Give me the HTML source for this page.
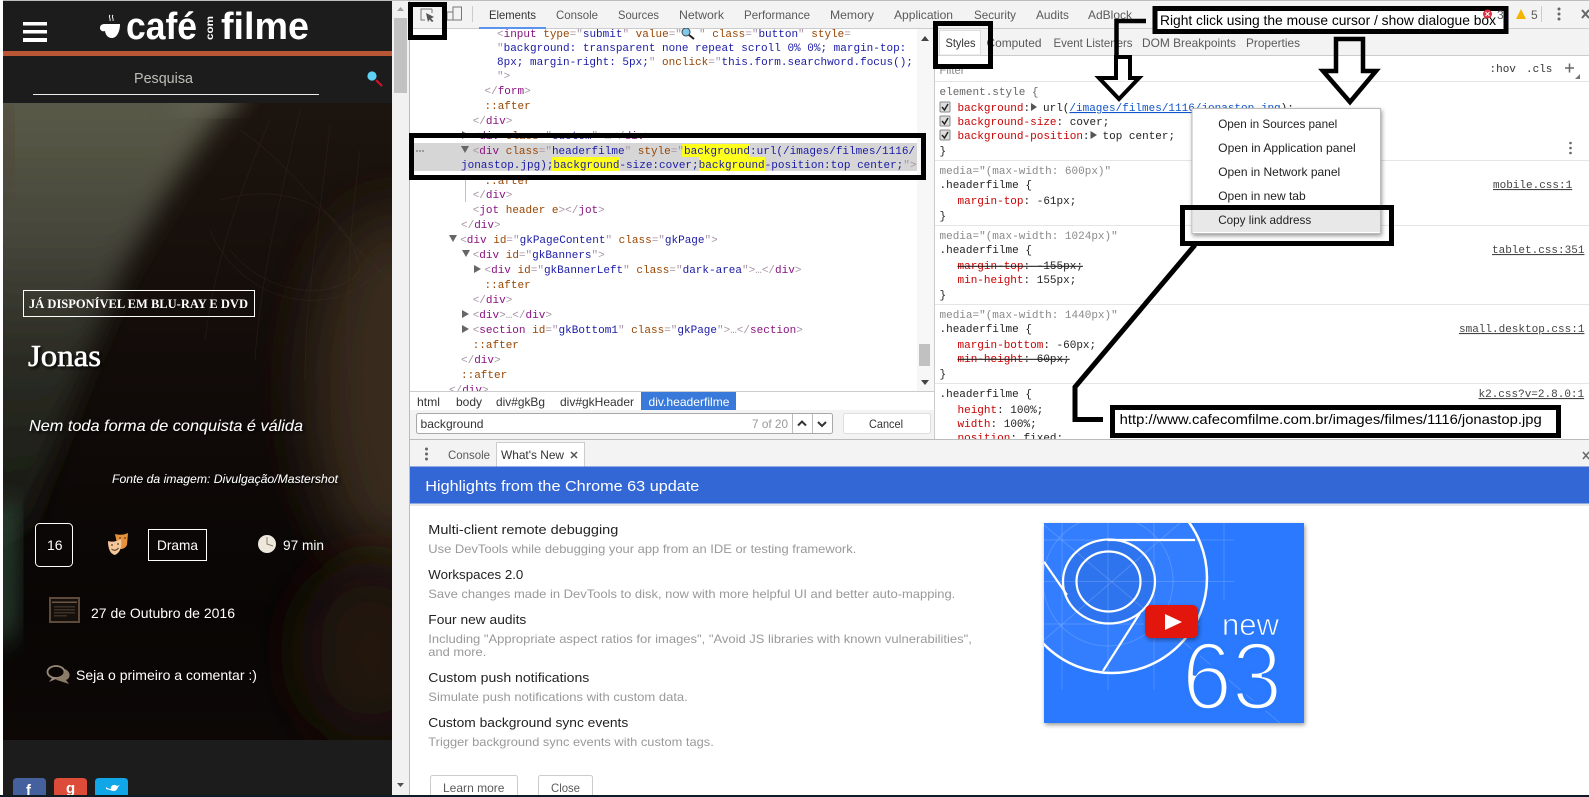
<!DOCTYPE html>
<html><head><meta charset="utf-8"><title>DevTools</title>
<style>
html,body{margin:0;padding:0;background:#fff;width:1589px;height:797px;overflow:hidden}
svg{display:block}
text{white-space:pre}
.s{font:12px "Liberation Sans",sans-serif;fill:#333}
.g{fill:#5a5a5a}
.m{font:11px "Liberation Mono",monospace;fill:#222}
.b{fill:#a894a6}.n{fill:#881280}.a{fill:#994500}.v{fill:#1a1aa6}
.r{fill:#c80000}.q{fill:#8a8a8a}
.h{font:13px "Liberation Sans",sans-serif;fill:#222}
.d{font:12px "Liberation Sans",sans-serif;fill:#999}
.w{font-family:"Liberation Sans",sans-serif;fill:#fff}
.ts{filter:url(#sh)}
</style></head><body>
<svg width="1589" height="797" viewBox="0 0 1589 797" xmlns="http://www.w3.org/2000/svg">
<defs>
<filter id="b1" x="-30%" y="-30%" width="160%" height="160%"><feGaussianBlur stdDeviation="13"/></filter>
<filter id="b2" x="-50%" y="-50%" width="200%" height="200%"><feGaussianBlur stdDeviation="30"/></filter>
<filter id="sh" x="-10%" y="-30%" width="125%" height="180%"><feDropShadow dx="2" dy="2" stdDeviation="1.5" flood-color="#000" flood-opacity=".9"/></filter>
<filter id="ms" x="-10%" y="-10%" width="120%" height="125%"><feDropShadow dx="1" dy="2" stdDeviation="2" flood-color="#000" flood-opacity=".4"/></filter>
<linearGradient id="base" x1="0" y1="0" x2="0" y2="1"><stop offset="0" stop-color="#1c140e"/><stop offset=".5" stop-color="#100a08"/><stop offset=".8" stop-color="#080504"/><stop offset="1" stop-color="#0d0806"/></linearGradient>
<linearGradient id="olive" gradientUnits="userSpaceOnUse" x1="0" y1="103" x2="0" y2="560"><stop offset="0" stop-color="#5a5a48"/><stop offset=".3" stop-color="#45453a"/><stop offset=".55" stop-color="#2b2c24"/><stop offset="1" stop-color="#14160f"/></linearGradient>
<clipPath id="hero"><rect x="3" y="103" width="389" height="637"/></clipPath>
<clipPath id="vid"><rect x="1044" y="523" width="260" height="200"/></clipPath>
<clipPath id="els"><rect x="409" y="28" width="508" height="363"/></clipPath>
<clipPath id="sty"><rect x="935" y="55" width="654" height="384"/></clipPath>
</defs>

<!-- left site -->
<rect x="3" y="1" width="389" height="794" fill="#1c1c1c"/>
<g clip-path="url(#hero)">
<rect x="3" y="103" width="389" height="637" fill="url(#base)"/>
<ellipse cx="395" cy="390" rx="85" ry="180" fill="#38291e" filter="url(#b2)"/>
<ellipse cx="370" cy="650" rx="70" ry="90" fill="#21150f" filter="url(#b2)"/>
<path d="M-30 75H255C205 130 160 200 123 270C100 320 80 380 62 430L30 520L-30 560Z" fill="url(#olive)" filter="url(#b1)"/>
<ellipse cx="205" cy="104" rx="35" ry="9" fill="#68685a" filter="url(#b1)" opacity=".7"/>
<rect x="3" y="103" width="9" height="80" fill="#4c3d2c" filter="url(#b1)"/>
<path d="M-8 510L16 500L14 630L-8 650Z" fill="#2f4a37" filter="url(#b1)"/>
<g fill="none" stroke="#4d3d30" stroke-width=".8" opacity=".25">
<path d="M240 130C300 170 350 250 390 280"/><path d="M270 120C240 190 215 260 205 340"/><path d="M300 110C280 200 260 280 255 360"/>
<path d="M220 200C290 180 350 210 360 270C340 300 270 300 230 250"/><path d="M330 125C320 220 305 300 305 380"/>
<path d="M360 150C350 230 345 300 350 380"/><path d="M210 230C240 300 320 320 370 280"/>
</g>
</g>
<rect x="3" y="51" width="389" height="5" fill="#b95735"/>
<rect x="23" y="22" width="24" height="3.500" fill="#fff"/><rect x="23" y="30" width="24" height="3.500" fill="#fff"/><rect x="23" y="38" width="24" height="4" fill="#fff"/>
<path d="M105 24H120C120 33 116 38 112 38C108 38 105.500 35 105 31C102 32 100 30 100 28C100 25 102 24 105 24Z" fill="#fff"/>
<path d="M110 15C108 17 111 18 110 21M113 15C111 17 114 18 113 21" stroke="#fff" fill="none" stroke-width=".9"/>
<text x="126" y="39" textLength="71" lengthAdjust="spacingAndGlyphs" style="font:bold 38px 'Liberation Sans',sans-serif" fill="#fff">café</text>
<text x="221" y="39" textLength="88" lengthAdjust="spacingAndGlyphs" style="font:bold 38px 'Liberation Sans',sans-serif" fill="#fff">filme</text>
<text transform="translate(213,40) rotate(-90)" textLength="24" lengthAdjust="spacingAndGlyphs" style="font:bold 10px 'Liberation Sans',sans-serif" fill="#fff">com</text>
<text x="134" y="83" textLength="59" lengthAdjust="spacingAndGlyphs" style="font:15px 'Liberation Sans',sans-serif" fill="#bdbdb8">Pesquisa</text>
<rect x="33" y="94" width="286" height="1" fill="#eee"/>
<circle cx="372" cy="76" r="4.600" fill="#5fd3f5"/><path d="M376 80L382 86" stroke="#d8102a" stroke-width="2"/>

<rect x="23.500" y="290.500" width="231" height="26" fill="none" stroke="#fff"/>
<text x="29" y="308" textLength="219" lengthAdjust="spacingAndGlyphs" style="font:bold 13px 'Liberation Serif',serif" fill="#fff">JÁ DISPONÍVEL EM BLU-RAY E DVD</text>
<text class="ts" x="28" y="366" textLength="73" lengthAdjust="spacingAndGlyphs" style="font:31px 'Liberation Serif',serif;stroke:#fff;stroke-width:.5" fill="#fff">Jonas</text>
<text class="ts" x="29" y="431" textLength="274" lengthAdjust="spacingAndGlyphs" style="font:italic 16px 'Liberation Sans',sans-serif" fill="#fff">Nem toda forma de conquista é válida</text>
<text class="ts" x="112" y="483" textLength="226" lengthAdjust="spacingAndGlyphs" style="font:italic 12px 'Liberation Sans',sans-serif" fill="#fff">Fonte da imagem: Divulgação/Mastershot</text>

<rect x="35.500" y="523.500" width="37" height="43" rx="4" fill="none" stroke="#fff"/>
<text class="w" x="47" y="550" font-size="14">16</text>
<path d="M115 534Q122 536 128 533L127 545C125 549 121 550 118 548Z" fill="#e8913c"/>
<path d="M108 541Q114 543 121 539C122 546 121 552 115 555C110 554 108 548 108 541Z" fill="#f3c79a"/>
<path d="M111.500 549Q115 552 118.500 548" stroke="#5a3a20" fill="none"/>
<circle cx="112" cy="545" r=".9" fill="#5a3a20"/><circle cx="118" cy="544" r=".9" fill="#5a3a20"/>
<circle cx="120" cy="538" r=".9" fill="#5a3a20"/><circle cx="125" cy="538" r=".9" fill="#5a3a20"/>
<rect x="148.500" y="529.500" width="58" height="31" fill="none" stroke="#fff"/>
<text class="w" x="157" y="550" font-size="14" textLength="41" lengthAdjust="spacingAndGlyphs">Drama</text>
<circle cx="267" cy="544" r="9" fill="#eee8dc"/><path d="M267 537V544L273 546" stroke="#8a7a68" fill="none"/>
<text class="w" x="283" y="550" font-size="14" textLength="41" lengthAdjust="spacingAndGlyphs">97 min</text>
<rect x="50" y="598" width="29" height="24" fill="#15100c" stroke="#5d4a3a" stroke-width="2"/>
<rect x="52" y="601.500" width="25" height="1.500" fill="#6b5645"/>
<g fill="#3d3026"><rect x="54" y="606" width="21" height="1.500"/><rect x="54" y="609" width="21" height="1.500"/><rect x="54" y="612" width="21" height="1.500"/><rect x="54" y="615" width="13" height="1.500"/></g>
<text class="w" x="91" y="618" font-size="14" textLength="144" lengthAdjust="spacingAndGlyphs">27 de Outubro de 2016</text>
<ellipse cx="56" cy="672" rx="8.500" ry="6" fill="none" stroke="#9a8a78" stroke-width="1.800"/>
<path d="M52 678L49 682L57 678.500" fill="#9a8a78"/>
<path d="M65 669C71 672 71 678 66 680L69 684L60 681L55 679.500C60 679 65 675 65 669Z" fill="#8a7a68"/>
<text class="w" x="76" y="680" font-size="14" textLength="181" lengthAdjust="spacingAndGlyphs">Seja o primeiro a comentar :)</text>

<path d="M13 795V782Q13 778 17 778H42Q46 778 46 782V795Z" fill="#45619d"/>
<path d="M54 795V782Q54 778 58 778H83Q87 778 87 782V795Z" fill="#dd4b39"/>
<path d="M95 795V782Q95 778 99 778H124Q128 778 128 782V795Z" fill="#10a6e8"/>
<text class="w" x="26" y="795" font-size="15" font-weight="bold">f</text>
<text class="w" x="66" y="793" font-size="15" font-weight="bold">g</text>
<path d="M106 789L110 790C114 792 117 791 118 787L120 785L117 786C113 783 110 787 111 789C109 789 107 788 106 787Z" fill="#fff"/>

<!-- page scrollbar -->
<rect x="392" y="0" width="17" height="797" fill="#f1f1f1"/>
<rect x="394" y="18" width="13" height="75" fill="#c1c1c1"/>
<path d="M397 11L400.500 7L404 11Z" fill="#a0a0a0"/><path d="M397 783L400.500 787L404 783Z" fill="#505050"/>

<!-- devtools top bar -->
<rect x="409" y="0" width="1180" height="28" fill="#f3f3f3"/>
<rect x="409" y="28" width="1180" height="1" fill="#ccc"/>
<rect x="409" y="0" width="1" height="797" fill="#bbb"/>
<rect x="0" y="0" width="1589" height="1" fill="#bdbdbd"/>
<path d="M432 9H421V20H425M432 9V13" fill="none" stroke="#777"/>
<path d="M426 13L434 17L431 18.500L433.500 21L432 22L429.500 19.500L428 22Z" fill="#555"/>
<rect x="453" y="7" width="8.500" height="13" fill="none" stroke="#777"/><rect x="447" y="12" width="6" height="8" fill="none" stroke="#777"/>
<rect x="472" y="6" width="1" height="16" fill="#ccc"/>
<g class="s">
<text class="s" x="489" y="19" textLength="47" lengthAdjust="spacingAndGlyphs">Elements</text>
<text class="s g" x="556" y="19" textLength="42" lengthAdjust="spacingAndGlyphs">Console</text>
<text class="s g" x="618" y="19" textLength="41" lengthAdjust="spacingAndGlyphs">Sources</text>
<text class="s g" x="679" y="19" textLength="45" lengthAdjust="spacingAndGlyphs">Network</text>
<text class="s g" x="744" y="19" textLength="66" lengthAdjust="spacingAndGlyphs">Performance</text>
<text class="s g" x="830" y="19" textLength="44" lengthAdjust="spacingAndGlyphs">Memory</text>
<text class="s g" x="894" y="19" textLength="59" lengthAdjust="spacingAndGlyphs">Application</text>
<text class="s g" x="974" y="19" textLength="42" lengthAdjust="spacingAndGlyphs">Security</text>
<text class="s g" x="1036" y="19" textLength="33" lengthAdjust="spacingAndGlyphs">Audits</text>
<text class="s g" x="1088" y="19" textLength="44" lengthAdjust="spacingAndGlyphs">AdBlock</text>
</g>
<rect x="479" y="27" width="67" height="2" fill="#5a94ee"/>
<path d="M1516 19L1521 9L1526 19Z" fill="#f4b400"/>
<text class="s g" x="1531" y="19">5</text>
<rect x="1541" y="6" width="1" height="16" fill="#ccc"/>
<circle cx="1559" cy="9" r="1.500" fill="#666"/><circle cx="1559" cy="14" r="1.500" fill="#666"/><circle cx="1559" cy="19" r="1.500" fill="#666"/>
<path d="M1582 10L1589 18M1589 10L1582 18" stroke="#666" stroke-width="2"/>

<!-- elements panel -->
<rect x="410" y="29" width="507" height="362" fill="#fff"/>
<rect x="917" y="29" width="17" height="362" fill="#f7f7f7"/>
<rect x="919" y="344" width="11" height="22" fill="#c1c1c1"/>
<path d="M921 41L925 36L929 41Z" fill="#444"/><path d="M921 380L925 385L929 380Z" fill="#444"/>
<rect x="410" y="143" width="507" height="28" fill="#d6d6d6"/>
<rect x="682" y="144" width="68" height="13" fill="#ffff1e"/>
<rect x="552" y="157" width="68" height="14" fill="#ffff1e"/>
<rect x="699" y="157" width="66" height="14" fill="#ffff1e"/>
<rect x="465" y="176" width="1" height="26" fill="#a6c8f0"/>
<g clip-path="url(#els)">
<text class="m" x="497" y="37"><tspan class="b">&lt;</tspan><tspan class="n">input</tspan> <tspan class="a">type</tspan><tspan class="b">="</tspan><tspan class="v">submit</tspan><tspan class="b">"</tspan> <tspan class="a">value</tspan><tspan class="b">="</tspan></text>
<circle cx="686" cy="32" r="4" fill="#7ec8ee" stroke="#444"/><path d="M689 35L694 39" stroke="#222" stroke-width="2"/>
<text class="m" x="699" y="37"><tspan class="b">"</tspan> <tspan class="a">class</tspan><tspan class="b">="</tspan><tspan class="v">button</tspan><tspan class="b">"</tspan> <tspan class="a">style</tspan><tspan class="b">=</tspan></text>
<text class="m v" x="497" y="51"><tspan class="b">"</tspan>background: transparent none repeat scroll 0% 0%; margin-top:</text>
<text class="m v" x="497" y="65">8px; margin-right: 5px;<tspan class="b">"</tspan> <tspan class="a">onclick</tspan><tspan class="b">="</tspan>this.form.searchword.focus();</text>
<text class="m b" x="497" y="79">"&gt;</text>
<text class="m" x="484.500" y="94"><tspan class="b">&lt;/</tspan><tspan class="n">form</tspan><tspan class="b">&gt;</tspan></text>
<text class="m a" x="484.500" y="109">::after</text>
<text class="m" x="472.700" y="124"><tspan class="b">&lt;/</tspan><tspan class="n">div</tspan><tspan class="b">&gt;</tspan></text>
<text class="m" x="472.700" y="139"><tspan class="b">&lt;</tspan><tspan class="n">div</tspan> <tspan class="a">class</tspan><tspan class="b">="</tspan><tspan class="v">custom</tspan><tspan class="b">"&gt;…&lt;/</tspan><tspan class="n">div</tspan><tspan class="b">&gt;</tspan></text>
<text class="m" x="472.700" y="154"><tspan class="b">&lt;</tspan><tspan class="n">div</tspan> <tspan class="a">class</tspan><tspan class="b">="</tspan><tspan class="v">headerfilme</tspan><tspan class="b">"</tspan> <tspan class="a">style</tspan><tspan class="b">="</tspan><tspan class="v">background:url(/images/filmes/1116/</tspan></text>
<text class="m v" x="461" y="168">jonastop.jpg);background-size:cover;background-position:top center;<tspan class="b">"&gt;</tspan></text>
<text class="m a" x="484.500" y="184">::after</text>
<text class="m" x="472.700" y="198"><tspan class="b">&lt;/</tspan><tspan class="n">div</tspan><tspan class="b">&gt;</tspan></text>
<text class="m" x="472.700" y="213"><tspan class="b">&lt;</tspan><tspan class="n">jot</tspan> <tspan class="a">header e</tspan><tspan class="b">&gt;&lt;/</tspan><tspan class="n">jot</tspan><tspan class="b">&gt;</tspan></text>
<text class="m" x="461" y="228"><tspan class="b">&lt;/</tspan><tspan class="n">div</tspan><tspan class="b">&gt;</tspan></text>
<text class="m" x="460.200" y="243"><tspan class="b">&lt;</tspan><tspan class="n">div</tspan> <tspan class="a">id</tspan><tspan class="b">="</tspan><tspan class="v">gkPageContent</tspan><tspan class="b">"</tspan> <tspan class="a">class</tspan><tspan class="b">="</tspan><tspan class="v">gkPage</tspan><tspan class="b">"&gt;</tspan></text>
<text class="m" x="472.700" y="258"><tspan class="b">&lt;</tspan><tspan class="n">div</tspan> <tspan class="a">id</tspan><tspan class="b">="</tspan><tspan class="v">gkBanners</tspan><tspan class="b">"&gt;</tspan></text>
<text class="m" x="484.500" y="273"><tspan class="b">&lt;</tspan><tspan class="n">div</tspan> <tspan class="a">id</tspan><tspan class="b">="</tspan><tspan class="v">gkBannerLeft</tspan><tspan class="b">"</tspan> <tspan class="a">class</tspan><tspan class="b">="</tspan><tspan class="v">dark-area</tspan><tspan class="b">"&gt;…&lt;/</tspan><tspan class="n">div</tspan><tspan class="b">&gt;</tspan></text>
<text class="m a" x="484.500" y="288">::after</text>
<text class="m" x="472.700" y="303"><tspan class="b">&lt;/</tspan><tspan class="n">div</tspan><tspan class="b">&gt;</tspan></text>
<text class="m" x="472.700" y="318"><tspan class="b">&lt;</tspan><tspan class="n">div</tspan><tspan class="b">&gt;…&lt;/</tspan><tspan class="n">div</tspan><tspan class="b">&gt;</tspan></text>
<text class="m" x="472.700" y="333"><tspan class="b">&lt;</tspan><tspan class="n">section</tspan> <tspan class="a">id</tspan><tspan class="b">="</tspan><tspan class="v">gkBottom1</tspan><tspan class="b">"</tspan> <tspan class="a">class</tspan><tspan class="b">="</tspan><tspan class="v">gkPage</tspan><tspan class="b">"&gt;…&lt;/</tspan><tspan class="n">section</tspan><tspan class="b">&gt;</tspan></text>
<text class="m a" x="472.700" y="348">::after</text>
<text class="m" x="461" y="363"><tspan class="b">&lt;/</tspan><tspan class="n">div</tspan><tspan class="b">&gt;</tspan></text>
<text class="m a" x="461" y="378">::after</text>
<text class="m" x="449" y="393"><tspan class="b">&lt;/</tspan><tspan class="n">div</tspan><tspan class="b">&gt;</tspan></text>
<g fill="#666">
<path d="M462 131L469 135L462 139Z"/><path d="M461 146H469L465 153Z"/>
<path d="M449 235H457L453 242Z"/><path d="M462 250H470L466 257Z"/>
<path d="M474 265L481 269L474 273Z"/><path d="M462 310L469 314L462 318Z"/><path d="M462 325L469 329L462 333Z"/>
</g>
<circle cx="417" cy="151" r="1" fill="#888"/><circle cx="420" cy="151" r="1" fill="#888"/><circle cx="423" cy="151" r="1" fill="#888"/>
</g>

<!-- breadcrumbs -->
<rect x="410" y="391" width="524" height="19" fill="#fff"/>
<rect x="410" y="391" width="524" height="1" fill="#ccc"/>
<text class="s" x="417" y="406" textLength="23" lengthAdjust="spacingAndGlyphs">html</text>
<text class="s" x="456" y="406" textLength="26" lengthAdjust="spacingAndGlyphs">body</text>
<text class="s" x="496" y="406" textLength="49" lengthAdjust="spacingAndGlyphs">div#gkBg</text>
<text class="s" x="560" y="406" textLength="74" lengthAdjust="spacingAndGlyphs">div#gkHeader</text>
<rect x="641" y="392" width="95" height="18" fill="#3879d9"/>
<text class="s" style="fill:#fff" x="648.500" y="406" textLength="81" lengthAdjust="spacingAndGlyphs">div.headerfilme</text>
<!-- search bar -->
<rect x="410" y="410" width="524" height="29" fill="#f3f3f3"/>
<rect x="416.500" y="413.500" width="416" height="20" rx="2" fill="#fff" stroke="#a9a9a9"/>
<text class="s" x="420.500" y="428" textLength="63" lengthAdjust="spacingAndGlyphs">background</text>
<text class="s" style="fill:#999" x="752" y="428" textLength="36" lengthAdjust="spacingAndGlyphs">7 of 20</text>
<rect x="792" y="414" width="1" height="19" fill="#bbb"/><rect x="812" y="414" width="1" height="19" fill="#bbb"/>
<path d="M798 425.500L802 421.500L806 425.500M818 422L822 426L826 422" fill="none" stroke="#333" stroke-width="2"/>
<rect x="843.500" y="413.500" width="87" height="20" rx="2" fill="#fff" stroke="#ddd"/>
<text class="s" x="869" y="428" textLength="34" lengthAdjust="spacingAndGlyphs">Cancel</text>

<!-- styles panel -->
<rect x="934" y="29" width="655" height="410" fill="#fff"/>
<rect x="934" y="29" width="655" height="26" fill="#f3f3f3"/>
<rect x="934" y="55" width="655" height="1" fill="#ccc"/>
<rect x="934" y="29" width="1" height="410" fill="#ccc"/>
<rect x="939.500" y="30.500" width="41" height="24.500" fill="#fff" stroke="#ddd"/>
<text class="s" x="945.500" y="47" textLength="30" lengthAdjust="spacingAndGlyphs">Styles</text>
<text class="s g" x="986.500" y="47" textLength="55" lengthAdjust="spacingAndGlyphs">Computed</text>
<text class="s g" x="1053.500" y="47" textLength="79" lengthAdjust="spacingAndGlyphs">Event Listeners</text>
<text class="s g" x="1142" y="47" textLength="94" lengthAdjust="spacingAndGlyphs">DOM Breakpoints</text>
<text class="s g" x="1246" y="47" textLength="54" lengthAdjust="spacingAndGlyphs">Properties</text>
<g clip-path="url(#sty)">
<text class="s q" x="939.500" y="74" textLength="25" lengthAdjust="spacingAndGlyphs">Filter</text>
<text class="m" style="fill:#333" x="1489.500" y="72">:hov</text>
<text class="m" style="fill:#333" x="1526" y="72">.cls</text>
<path d="M1565 68H1574M1569.500 63.500V72.500" stroke="#666" stroke-width="1.500"/>
<path d="M1580 79V74L1575 79Z" fill="#777"/>
<rect x="935" y="81" width="654" height="1" fill="#e5e5e5"/>
<text class="m q" style="fill:#666" x="939.500" y="95">element.style {</text>
<g fill="#ddd" stroke="#888"><rect x="940" y="102" width="10" height="10" rx="1"/><rect x="940" y="116" width="10" height="10" rx="1"/><rect x="940" y="130" width="10" height="10" rx="1"/></g>
<path d="M942 107L944.500 110L948 104M942 121L944.500 124L948 118M942 135L944.500 138L948 132" fill="none" stroke="#222" stroke-width="1.500"/>
<text class="m" x="957.500" y="111"><tspan class="r">background</tspan>:</text>
<path d="M1031 103L1037 107L1031 111ZM1090.500 131L1097 135L1090.500 139Z" fill="#555"/>
<text class="m" x="1043" y="111">url(<tspan style="fill:#1155cc;text-decoration:underline">/images/filmes/1116/jonastop.jpg</tspan>);</text>
<text class="m" x="957.500" y="125"><tspan class="r">background-size</tspan>: cover;</text>
<text class="m r" x="957.500" y="139">background-position<tspan style="fill:#222">:</tspan></text>
<text class="m" x="1102.500" y="139">top center;</text>
<text class="m" x="939.500" y="154">}</text>
<circle cx="1570.500" cy="143" r="1.300" fill="#666"/><circle cx="1570.500" cy="148" r="1.300" fill="#666"/><circle cx="1570.500" cy="153" r="1.300" fill="#666"/>
<rect x="935" y="160" width="654" height="1" fill="#e5e5e5"/>
<text class="m q" x="939.500" y="174">media="(max-width: 600px)"</text>
<text class="m" x="939.500" y="188">.headerfilme {</text>
<text class="m" style="fill:#444;text-decoration:underline" x="1493" y="188">mobile.css:1</text>
<text class="m" x="957.500" y="204"><tspan class="r">margin-top</tspan>: -61px;</text>
<text class="m" x="939.500" y="219">}</text>
<rect x="935" y="225" width="654" height="1" fill="#e5e5e5"/>
<text class="m q" x="939.500" y="239">media="(max-width: 1024px)"</text>
<text class="m" x="939.500" y="253">.headerfilme {</text>
<text class="m" style="fill:#444;text-decoration:underline" x="1492" y="253">tablet.css:351</text>
<text class="m" style="text-decoration:line-through" x="957.500" y="269"><tspan class="r">margin-top</tspan>: -155px;</text>
<text class="m" x="957.500" y="283"><tspan class="r">min-height</tspan>: 155px;</text>
<text class="m" x="939.500" y="298">}</text>
<rect x="935" y="304" width="654" height="1" fill="#e5e5e5"/>
<text class="m q" x="939.500" y="318">media="(max-width: 1440px)"</text>
<text class="m" x="939.500" y="332">.headerfilme {</text>
<text class="m" style="fill:#444;text-decoration:underline" x="1459" y="332">small.desktop.css:1</text>
<text class="m" x="957.500" y="348"><tspan class="r">margin-bottom</tspan>: -60px;</text>
<text class="m" style="text-decoration:line-through" x="957.500" y="362"><tspan class="r">min-height</tspan>: 60px;</text>
<text class="m" x="939.500" y="377">}</text>
<rect x="935" y="383" width="654" height="1" fill="#e5e5e5"/>
<text class="m" x="939.500" y="397">.headerfilme {</text>
<text class="m" style="fill:#444;text-decoration:underline" x="1478.500" y="397">k2.css?v=2.8.0:1</text>
<text class="m" x="957.500" y="413"><tspan class="r">height</tspan>: 100%;</text>
<text class="m" x="957.500" y="427"><tspan class="r">width</tspan>: 100%;</text>
<text class="m" x="957.500" y="441"><tspan class="r">position</tspan>: fixed;</text>
</g>

<!-- drawer -->
<rect x="410" y="439" width="1179" height="28" fill="#f3f3f3"/>
<rect x="410" y="439" width="1179" height="1" fill="#bbb"/>
<circle cx="426.500" cy="449" r="1.500" fill="#666"/><circle cx="426.500" cy="454" r="1.500" fill="#666"/><circle cx="426.500" cy="459" r="1.500" fill="#666"/>
<text class="s g" x="448" y="459" textLength="42" lengthAdjust="spacingAndGlyphs">Console</text>
<rect x="496.500" y="442.500" width="88" height="25" fill="#fff" stroke="#ccc"/>
<text class="s" x="501" y="459" textLength="63" lengthAdjust="spacingAndGlyphs">What's New</text>
<path d="M571 452L577 458M577 452L571 458" stroke="#555" stroke-width="1.500"/>
<path d="M1583 452L1589 459M1589 452L1583 459" stroke="#666" stroke-width="1.500"/>

<rect x="410" y="467" width="1179" height="328" fill="#fff"/>
<rect x="410" y="503" width="1179" height="3" fill="#e8e8e8"/>
<rect x="410" y="466.500" width="1179" height="37" fill="#3367d6"/>
<text x="425.300" y="491" textLength="274" lengthAdjust="spacingAndGlyphs" style="font:15px 'Liberation Sans',sans-serif" fill="#fff">Highlights from the Chrome 63 update</text>

<text class="h" x="428.300" y="534" textLength="190" lengthAdjust="spacingAndGlyphs">Multi-client remote debugging</text>
<text class="d" x="428.300" y="553" textLength="428" lengthAdjust="spacingAndGlyphs">Use DevTools while debugging your app from an IDE or testing framework.</text>
<text class="h" x="428.300" y="579" textLength="95" lengthAdjust="spacingAndGlyphs">Workspaces 2.0</text>
<text class="d" x="428.300" y="598" textLength="527" lengthAdjust="spacingAndGlyphs">Save changes made in DevTools to disk, now with more helpful UI and better auto-mapping.</text>
<text class="h" x="428.300" y="624" textLength="98" lengthAdjust="spacingAndGlyphs">Four new audits</text>
<text class="d" x="428.300" y="643" textLength="543.500" lengthAdjust="spacingAndGlyphs">Including "Appropriate aspect ratios for images", "Avoid JS libraries with known vulnerabilities",</text>
<text class="d" x="428.300" y="656" textLength="58" lengthAdjust="spacingAndGlyphs">and more.</text>
<text class="h" x="428.300" y="682" textLength="161" lengthAdjust="spacingAndGlyphs">Custom push notifications</text>
<text class="d" x="428.300" y="701" textLength="259.500" lengthAdjust="spacingAndGlyphs">Simulate push notifications with custom data.</text>
<text class="h" x="428.300" y="727" textLength="200" lengthAdjust="spacingAndGlyphs">Custom background sync events</text>
<text class="d" x="428.300" y="746" textLength="285.500" lengthAdjust="spacingAndGlyphs">Trigger background sync events with custom tags.</text>

<rect x="430.500" y="775.500" width="87" height="24" rx="2" fill="#fff" stroke="#ccc"/>
<text class="s g" x="443" y="792" textLength="61.500" lengthAdjust="spacingAndGlyphs">Learn more</text>
<rect x="538.500" y="775.500" width="54" height="24" rx="2" fill="#fff" stroke="#ccc"/>
<text class="s g" x="551" y="792" textLength="29" lengthAdjust="spacingAndGlyphs">Close</text>

<!-- video -->
<rect x="1044" y="523" width="260" height="200" fill="#2979ff" filter="url(#ms)"/>
<g clip-path="url(#vid)">
<circle cx="1112" cy="578" r="95" fill="#4a8cff" opacity=".3"/>
<ellipse cx="1109" cy="581.500" rx="46" ry="42" fill="#2a6ce0" opacity=".55"/>
<g stroke="#fff" stroke-opacity=".16" fill="none">
<path d="M1044 540H1234M1044 581.500H1234M1044 624H1200M1062 523V690M1108 523V690M1154 523V690M1224 523V600"/>
<path d="M1044 525L1280 723M1044 640L1180 523"/>
<circle cx="1108" cy="581" r="65"/>
</g>
<g stroke="#fff" fill="none" stroke-width="2.200">
<ellipse cx="1108.500" cy="581.500" rx="32" ry="30"/><ellipse cx="1109" cy="581.500" rx="46" ry="42"/>
<circle cx="1112" cy="578" r="95" stroke-width="2.500"/>
<path d="M1108 540H1195M1044 561.700L1067 595M1140 613L1103 671"/>
</g>
</g>
<text x="1222" y="635" textLength="57" lengthAdjust="spacingAndGlyphs" style="font:31px 'Liberation Sans',sans-serif;fill:#fff;stroke:#2979ff;stroke-width:.7">new</text>
<text x="1182" y="709" textLength="100" lengthAdjust="spacingAndGlyphs" style="font:96px 'Liberation Sans',sans-serif;fill:#fff;stroke:#2979ff;stroke-width:3.500">63</text>
<rect x="1145" y="605" width="53" height="33" rx="6" fill="#e31610" filter="url(#ms)"/>
<path d="M1165 614L1182 622L1165 630Z" fill="#fff"/>

<!-- bottom edge -->
<rect x="0" y="795" width="1589" height="2" fill="#0e1a24"/>
<rect x="0" y="0" width="3" height="795" fill="#fff"/>

<!-- annotations -->
<g fill="none" stroke="#000">
<rect x="410.500" y="4.500" width="34" height="33" stroke-width="5"/>
<rect x="411.500" y="135.500" width="512" height="42" stroke-width="5"/>
<rect x="935.500" y="23.500" width="55" height="43" stroke-width="5"/>
</g>
<rect x="1155" y="8.500" width="351" height="23" fill="#fff" stroke="#000" stroke-width="5"/>
<text x="1160" y="25" textLength="336" lengthAdjust="spacingAndGlyphs" style="font:14px 'Liberation Sans',sans-serif" fill="#000">Right click using the mouse cursor / show dialogue box</text>
<circle cx="1487.500" cy="14" r="4.500" fill="#e0313c"/><path d="M1485.500 12L1489.500 16M1489.500 12L1485.500 16" stroke="#fff"/>
<text class="s g" x="1497" y="19">3</text>

<!-- context menu -->
<rect x="1192" y="108.500" width="188.500" height="125" fill="#fff" stroke="#bbb" filter="url(#ms)"/>
<rect x="1193" y="208" width="187" height="24" fill="#e8e8e8"/>
<text class="s" style="fill:#222" x="1218.200" y="128" textLength="119" lengthAdjust="spacingAndGlyphs">Open in Sources panel</text>
<text class="s" style="fill:#222" x="1218.200" y="152" textLength="137.500" lengthAdjust="spacingAndGlyphs">Open in Application panel</text>
<text class="s" style="fill:#222" x="1218.200" y="176" textLength="122" lengthAdjust="spacingAndGlyphs">Open in Network panel</text>
<text class="s" style="fill:#222" x="1218.200" y="200" textLength="87.500" lengthAdjust="spacingAndGlyphs">Open in new tab</text>
<text class="s" style="fill:#222" x="1218.200" y="224" textLength="93" lengthAdjust="spacingAndGlyphs">Copy link address</text>
<rect x="1182.500" y="207.500" width="209" height="36" fill="none" stroke="#000" stroke-width="5"/>

<!-- arrows -->
<g fill="none" stroke="#000" stroke-linejoin="miter">
<path d="M1146 21H1116.500V57" stroke-width="4.500"/>
<path d="M1116 57H1130V78H1139L1119 99L1099 78H1116Z" stroke-width="4"/>
<path d="M1336 39H1363V71H1376L1350 102L1323 71H1336Z" stroke-width="4.500"/>
<path d="M1195 245L1075 387V419.500H1103" stroke-width="5"/>
</g>
<rect x="1112.500" y="407.500" width="446" height="28" fill="#fff" stroke="#000" stroke-width="5"/>
<text x="1119.700" y="424" textLength="422" lengthAdjust="spacingAndGlyphs" style="font:14px 'Liberation Sans',sans-serif" fill="#000">http://www.cafecomfilme.com.br/images/filmes/1116/jonastop.jpg</text>
</svg>
</body></html>
